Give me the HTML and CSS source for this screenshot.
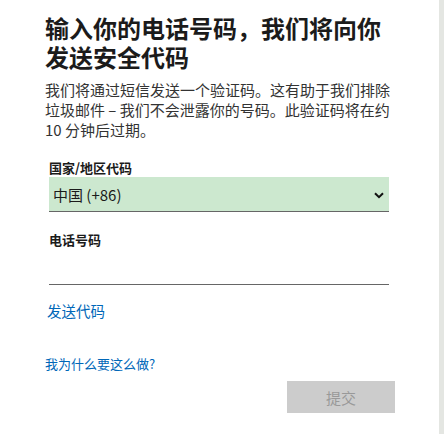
FILE: index.html
```html
<html lang="zh-CN">
<head>
    <meta charset="utf-8">
    <title>输入你的电话号码</title>
    <link rel="stylesheet" href="styles.css">
</head>
<body>
<main>
    <h1>输入你的电话号码，我们将向你发送安全代码</h1>
    <p class="desc">我们将通过短信发送一个验证码。这有助于我们排除垃圾邮件 – 我们不会泄露你的号码。此验证码将在约 10 分钟后过期。</p>
    <div class="form">
        <div class="field">
            <label for="country">国家/地区代码</label>
            <div class="select">
                <select id="country">
                    <option value="86">中国 (+86)</option>
                </select>
                <svg class="chev" width="10" height="7" viewBox="0 0 10 7"><path d="M1 1.2 5 5.2 9 1.2" fill="none" stroke="#111" stroke-width="2"/></svg>
            </div>
        </div>
        <div class="field">
            <label for="phone">电话号码</label>
            <input id="phone" class="line">
        </div>
        <a class="link send" href="#">发送代码</a>
        <a class="link why" href="#">我为什么要这么做?</a>
        <div class="actions">
            <button class="btn" disabled>提交</button>
        </div>
    </div>
</main>
<div class="rail"></div>
</body>
</html>
```
FILE: styles.css
```css
* {
    margin: 0;
    padding: 0;
    box-sizing: border-box;
}

html, body {
    height: 100%;
}

body {
    display: flex;
    color: #1b1b1b;
    background: #fff;
    font: normal 15px "Noto Sans CJK SC", "Liberation Sans", sans-serif;
    overflow: hidden;
}

main {
    flex: 1;
    padding: 13px 0 0 45px;
}

.rail {
    width: 5px;
    background: #e4e6e2;
}

h1 {
    width: 350px;
    font-size: 24px;
    line-height: 29px;
    font-weight: 700;
    color: #1b1b1b;
}

.desc {
    width: 348px;
    margin-top: 9px;
    font-size: 15px;
    line-height: 20px;
    color: #333;
}

.form {
    width: 350px;
}

.field {
    margin: 0 0 0 4px;
    width: 340px;
}

.field label {
    display: block;
    font-size: 13px;
    font-weight: 700;
    line-height: 18px;
    color: #1b1b1b;
}

.field:first-child {
    margin-top: 19px;
}

.field:nth-child(2) {
    margin-top: 19px;
}

.select {
    position: relative;
}

select {
    appearance: none;
    display: block;
    width: 100%;
    height: 35px;
    padding: 0 30px 0 4px;
    border: 0;
    border-bottom: 1px solid #666;
    background: #cce8cf;
    font: normal 15px "Noto Sans CJK SC", "Liberation Sans", sans-serif;
    color: #1b1b1b;
    outline: none;
}

.chev {
    position: absolute;
    right: 5px;
    top: 15px;
}

.line {
    display: block;
    width: 100%;
    height: 36px;
    border: 0;
    border-bottom: 1px solid #666;
    outline: none;
    font-size: 15px;
}

.link {
    display: block;
    color: #0067b8;
    text-decoration: none;
}

.send {
    margin: 16px 0 0 2px;
    font-size: 14.5px;
    line-height: 20px;
}

.why {
    margin-top: 34px;
    font-size: 13px;
    line-height: 18px;
}

.actions {
    display: flex;
    justify-content: flex-end;
    margin-top: 8px;
}

.btn {
    width: 108px;
    height: 32px;
    border: 0;
    background: #ccc;
    color: #999;
    font: normal 15px "Noto Sans CJK SC", "Liberation Sans", sans-serif;
}
```
